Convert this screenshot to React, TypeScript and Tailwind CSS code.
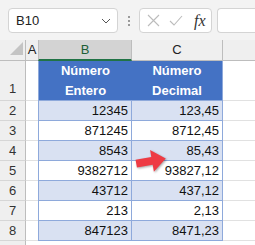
import React from "react";

const rows: [string, string][] = [
  ["12345", "123,45"],
  ["871245", "8712,45"],
  ["8543", "85,43"],
  ["9382712", "93827,12"],
  ["43712", "437,12"],
  ["213", "2,13"],
  ["847123", "8471,23"],
];

const font = { fontFamily: '"Liberation Sans", Arial, sans-serif' };

function Toolbar() {
  return (
    <div className="flex h-[40px] items-start bg-[#f3f3f3] pt-[8px] pl-[8px]">
      {/* name box */}
      <div className="flex h-[25px] w-[110px] items-center justify-between rounded-[4px] border border-[#d4d4d4] bg-white pl-[7px] pr-[6px]">
        <span className="text-[13px] text-[#222]">B10</span>
        <svg width="10" height="6" viewBox="0 0 10 6">
          <path d="M1 1 L5 5 L9 1" fill="none" stroke="#555" strokeWidth="1" />
        </svg>
      </div>
      {/* grip dots */}
      <div className="ml-[10px] mt-[8px] flex flex-col gap-[2px]">
        <span className="h-[2px] w-[2px] bg-[#9a9a9a]" />
        <span className="h-[2px] w-[2px] bg-[#9a9a9a]" />
        <span className="h-[2px] w-[2px] bg-[#9a9a9a]" />
      </div>
      {/* cancel / enter / fx */}
      <div className="ml-[9px] flex h-[25px] w-[73px] items-center rounded-[4px] border border-[#d4d4d4] bg-white pl-[7px]">
        <svg width="13" height="13" viewBox="0 0 13 13">
          <path d="M1 1 L12 12 M12 1 L1 12" stroke="#bcbcbc" strokeWidth="1.1" />
        </svg>
        <svg className="ml-[9px]" width="14" height="11" viewBox="0 0 14 11">
          <path d="M1 6 L5 10 L13 1" fill="none" stroke="#bcbcbc" strokeWidth="1.1" />
        </svg>
        <span
          className="ml-[11px] text-[16px] italic leading-none text-[#333]"
          style={{ fontFamily: '"Liberation Serif", "Times New Roman", serif' }}
        >
          fx
        </span>
      </div>
      <div className="ml-[5px] h-[25px] flex-1 rounded-l-[4px] border border-r-0 border-[#d4d4d4] bg-white" />
    </div>
  );
}

function ColumnHeaders() {
  return (
    <div className="flex h-[21px] text-[13px]">
      <div className="relative w-[26px] border-r border-b border-[#bdbdbd] bg-[#efefef]">
        <svg className="absolute left-[10px] top-[2px]" width="13" height="13" viewBox="0 0 13 13">
          <polygon points="13,0 13,13 0,13" fill="#c4c4c4" />
        </svg>
      </div>
      <div className="flex w-[12px] items-center justify-center border-b border-[#bdbdbd] bg-[#efefef] text-[#222]">
        A
      </div>
      <div className="flex w-[94px] items-center justify-center border-l border-r border-[#bdbdbd] border-b-2 border-b-[#217346] bg-[#d3d3d3] text-[#1d5e36]">
        B
      </div>
      <div className="flex w-[91px] items-center justify-center border-r border-b border-[#bdbdbd] bg-[#efefef] text-[#222]">
        C
      </div>
      <div className="flex-1 border-b border-[#bdbdbd] bg-[#efefef]" />
    </div>
  );
}

function RowHeader({ n, tall }: { n?: number; tall?: boolean }) {
  return (
    <div
      className={`flex w-[26px] justify-center border-r border-r-[#bdbdbd] border-b border-b-[#d6d6d6] bg-[#efefef] text-[13px] text-[#333] ${
        tall ? "items-end pb-[2px]" : "items-center"
      }`}
    >
      {n}
    </div>
  );
}

export default function App() {
  return (
    <div className="relative h-[245px] w-[255px] overflow-hidden bg-white" style={font}>
      <Toolbar />
      <ColumnHeaders />

      {/* row 1: table header */}
      <div className="flex h-[40px]">
        <RowHeader n={1} tall />
        <div className="w-[12px] border-b border-[#e1e1e1]" />
        <div className="flex w-[94px] flex-col items-center justify-center border-l border-b border-[#8ea9db] bg-[#4472c4] text-[13px] font-bold leading-[20px] text-white">
          <span>Número</span>
          <span>Entero</span>
        </div>
        <div className="flex w-[91px] flex-col items-center justify-center border-r border-b border-[#8ea9db] bg-[#4472c4] text-[13px] font-bold leading-[20px] text-white">
          <span>Número</span>
          <span>Decimal</span>
        </div>
        <div className="flex-1 border-b border-[#e1e1e1]" />
      </div>

      {rows.map(([a, b], i) => {
        const band = i % 2 === 0 ? "bg-[#d9e1f2]" : "bg-white";
        return (
          <div key={i} className="flex h-[20px] text-[13px] text-[#111]">
            <RowHeader n={i + 2} />
            <div className="w-[12px] border-b border-[#e1e1e1]" />
            <div className={`flex w-[94px] items-center justify-end border-l border-r border-b border-[#8ea9db] pr-[3px] ${band}`}>
              {a}
            </div>
            <div className={`flex w-[91px] items-center justify-end border-r border-b border-[#8ea9db] pr-[3px] ${band}`}>
              {b}
            </div>
            <div className="flex-1 border-b border-[#e1e1e1]" />
          </div>
        );
      })}

      <div className="flex h-[20px]">
        <RowHeader />
      </div>

      {/* red arrow */}
      <svg
        className="absolute left-[134px] top-[145px]"
        width="36"
        height="32"
        viewBox="0 0 36 32"
        style={{ filter: "drop-shadow(1px 1px 1px rgba(0,0,0,0.35))" }}
      >
        <polygon
          points="2,12 18,12 18,5 32,16 18,27 18,20 2,20"
          fill="#ee3b44"
          transform="rotate(-10 17 16)"
        />
      </svg>
    </div>
  );
}
